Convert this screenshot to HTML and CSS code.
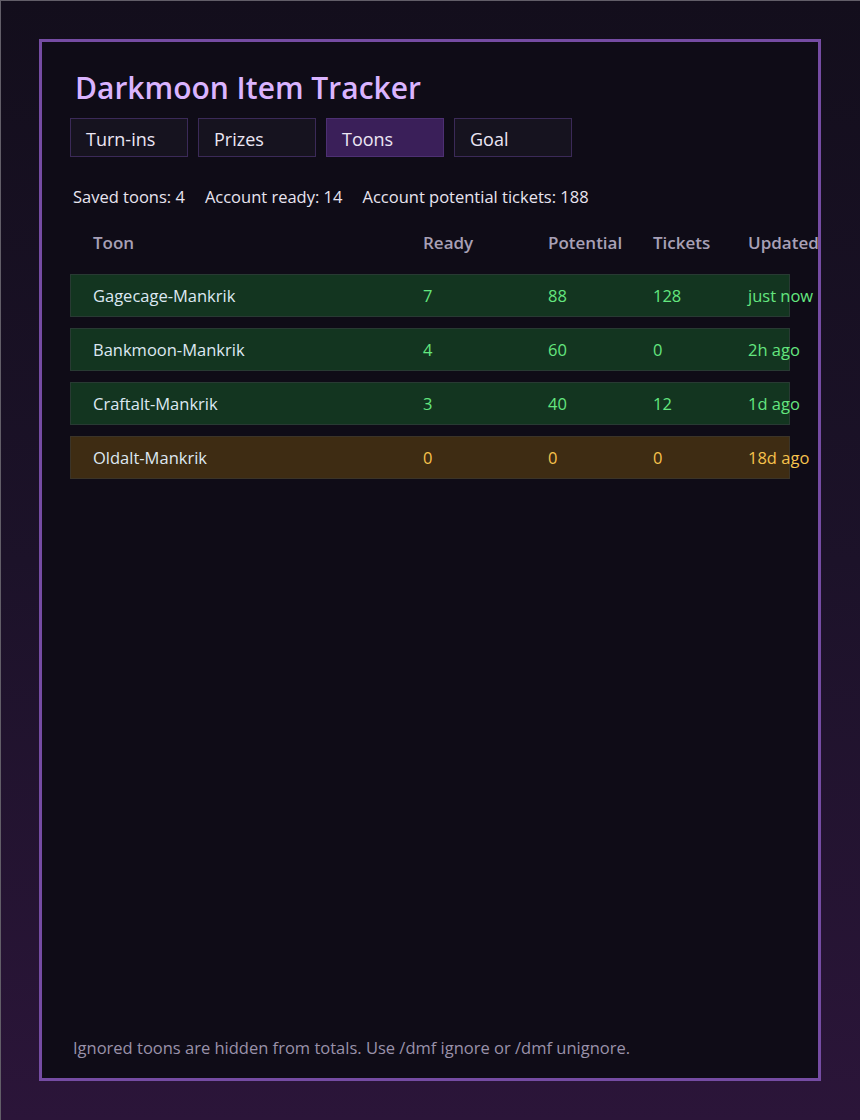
FILE: index.html
```html
<!DOCTYPE html>
<html lang="en">

<head>
    <meta charset="UTF-8">
    <meta name="viewport" content="width=device-width, initial-scale=1.0">
    <title>Darkmoon Item Tracker</title>
    <link rel="stylesheet" href="styles.css">
</head>

<body>
    <main class="panel">
        <h1 class="title">Darkmoon Item Tracker</h1>

        <nav class="tabs">
            <button class="tab">Turn-ins</button>
            <button class="tab">Prizes</button>
            <button class="tab active">Toons</button>
            <button class="tab">Goal</button>
        </nav>

        <div class="summary">
            <span>Saved toons: 4</span>
            <span>Account ready: 14</span>
            <span>Account potential tickets: 188</span>
        </div>

        <div class="toon-table">
            <div class="toon-row head">
                <div>Toon</div>
                <div>Ready</div>
                <div>Potential</div>
                <div>Tickets</div>
                <div>Updated</div>
            </div>
            <div class="toon-row fresh">
                <div class="name">Gagecage-Mankrik</div>
                <div>7</div>
                <div>88</div>
                <div>128</div>
                <div>just now</div>
            </div>
            <div class="toon-row fresh">
                <div class="name">Bankmoon-Mankrik</div>
                <div>4</div>
                <div>60</div>
                <div>0</div>
                <div>2h ago</div>
            </div>
            <div class="toon-row fresh">
                <div class="name">Craftalt-Mankrik</div>
                <div>3</div>
                <div>40</div>
                <div>12</div>
                <div>1d ago</div>
            </div>
            <div class="toon-row stale">
                <div class="name">Oldalt-Mankrik</div>
                <div>0</div>
                <div>0</div>
                <div>0</div>
                <div>18d ago</div>
            </div>
        </div>

        <p class="footnote">Ignored toons are hidden from totals. Use /dmf ignore or /dmf unignore.</p>
    </main>
</body>

</html>
```

FILE: styles.css
```css
* {
    margin: 0;
    padding: 0;
    box-sizing: border-box;
}

html {
    height: 100%;
}

body {
    font-family: 'Segoe UI', 'Open Sans', 'Noto Sans', sans-serif;
    background: linear-gradient(180deg, #130e1c 0%, #1c1229 50%, #2b1539 100%);
    box-shadow: inset 1px 1px 0 #625e68;
    color: #e8e4f0;
    height: 100%;
    padding: 39px;
}

.panel {
    height: 100%;
    background-color: #0f0c17;
    border: 3px solid #754ca3;
    padding: 0 28px;
    display: flex;
    flex-direction: column;
    overflow: hidden;
}

.title {
    font-size: 30px;
    font-weight: 600;
    color: #dab4ff;
    margin: 28px 0 12px 5px;
    line-height: 36px;
}

.tabs {
    display: flex;
    gap: 10px;
}

.tab {
    width: 118px;
    height: 39px;
    background-color: #16131f;
    border: 1px solid #3b2a58;
    color: #ece6f4;
    font-family: inherit;
    font-size: 18px;
    text-align: left;
    padding: 2px 15px 0;
}

.tab.active {
    background-color: #3a1f59;
    border-color: #4d3073;
}

.summary {
    display: flex;
    gap: 20px;
    font-size: 16.5px;
    margin: 29px 0 0 3px;
    line-height: 22px;
}

.toon-table {
    display: flex;
    flex-direction: column;
    gap: 11px;
    margin-top: 16px;
}

.toon-row {
    display: grid;
    grid-template-columns: 330px 125px 105px 95px 1fr;
    align-items: center;
    height: 43px;
    padding-left: 22px;
    font-size: 16.5px;
    white-space: nowrap;
    border: 1px solid transparent;
}

.toon-row.head {
    color: #a8a0b6;
    font-weight: 600;
    font-size: 17px;
    height: 36px;
    margin-bottom: 3px;
}

.toon-row.fresh {
    background-color: #133520;
    border-color: #283a33;
    color: #64e67f;
}

.toon-row.stale {
    background-color: #3e2c13;
    border-color: #3b3428;
    color: #f6c24c;
}

.toon-row .name {
    color: #dde8f2;
}

.footnote {
    margin: auto 0 19px 3px;
    font-size: 16.5px;
    color: #9a92aa;
}
```
